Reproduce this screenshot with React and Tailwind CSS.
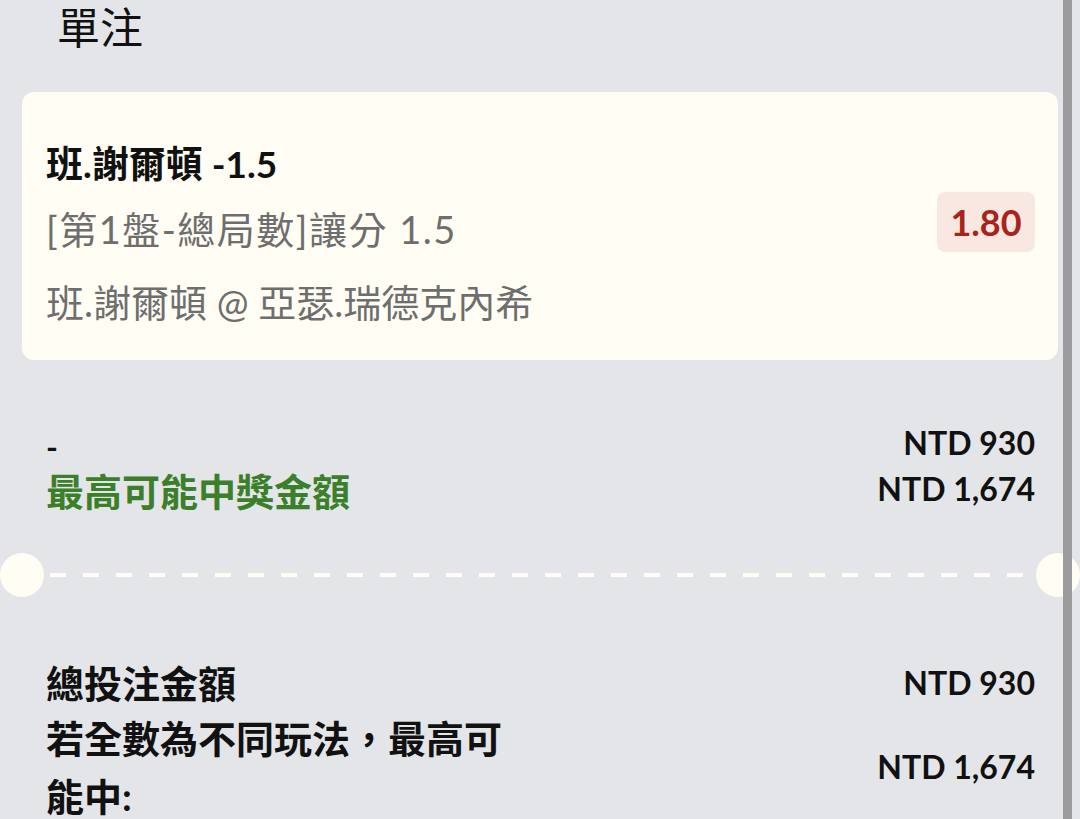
import React from 'react';

const FONT = "font-['Lato','Noto_Sans_CJK_TC',sans-serif]";

const bet = {
    pick: '班.謝爾頓 -1.5',
    market: '[第1盤-總局數]讓分 1.5',
    match: '班.謝爾頓 @ 亞瑟.瑞德克內希',
    odds: '1.80',
};

const DashedDivider = () => (
    <div className="flex items-center h-[44px] -mx-[22px]">
        <div className="w-[44px] h-[44px] rounded-full bg-[#fffdf4] shrink-0" />
        <svg className="flex-1 h-[6px] ml-[6px]" preserveAspectRatio="none">
            <line x1="0" y1="3" x2="100%" y2="3" stroke="#fffdf4" strokeWidth="4" strokeDasharray="16 17" />
        </svg>
        <div className="w-[44px] h-[44px] rounded-full bg-[#fffdf4] shrink-0" />
    </div>
);

const App = () => {
    return (
        <div className={`relative w-full h-[819px] overflow-hidden bg-[#e4e5e8] ${FONT}`}>
            <div className="px-[22px]">
                {/* Title */}
                <div className="h-[56px] pl-[35px] text-[43px] leading-[56px] text-[#111]">單注</div>

                {/* Bet card */}
                <div className="mt-[36px] bg-[#fffdf4] rounded-[12px] pl-[24px] pr-[23px] pt-[52px] pb-[38px] flex justify-between">
                    <div>
                        <div className="h-[40px] leading-[40px] text-[37px] font-bold text-[#111]">{bet.pick}</div>
                        <div className="mt-[25px] h-[40px] leading-[40px] text-[38px] tracking-[1.5px] text-[#6e6e6e]">{bet.market}</div>
                        <div className="mt-[33px] h-[40px] leading-[40px] text-[38px] text-[#6e6e6e]">{bet.match}</div>
                    </div>
                    <div className="mt-[48px] self-start h-[60px] w-[98px] rounded-[8px] bg-[#f9e7e1] flex items-center justify-center text-[36px] font-bold text-[#a8231b]">
                        {bet.odds}
                    </div>
                </div>

                {/* Summary */}
                <div className="pl-[24px] pr-[23px] mt-[60px] flex justify-between items-start">
                    <div className="pt-[5px] font-bold">
                        <div className="h-[44px] leading-[44px] text-[32px] text-[#111]">-</div>
                        <div className="h-[44px] leading-[44px] text-[38px] text-[#3b7f2a]">最高可能中獎金額</div>
                    </div>
                    <div className="text-right font-bold text-[32px] text-[#111]">
                        <div className="h-[46px] leading-[46px]">NTD 930</div>
                        <div className="h-[46px] leading-[46px]">NTD 1,674</div>
                    </div>
                </div>

                <div className="mt-[40px]">
                    <DashedDivider />
                </div>

                {/* Totals */}
                <div className="pl-[24px] pr-[23px] mt-[63px] font-bold text-[#111]">
                    <div className="flex justify-between items-center h-[46px]">
                        <div className="text-[38px] leading-[46px]">總投注金額</div>
                        <div className="text-[32px] leading-[46px]">NTD 930</div>
                    </div>
                    <div className="mt-[3px] flex justify-between items-center">
                        <div className="w-[470px] text-[38px] leading-[58px]">若全數為不同玩法，最高可能中:</div>
                        <div className="text-[32px] leading-[46px]">NTD 1,674</div>
                    </div>
                </div>
            </div>

            {/* scrollbar overlay */}
            <div className="absolute top-0 bottom-0 left-[1063px] w-[9px] bg-[#9c9c9e]" />
        </div>
    );
};

export default App;
